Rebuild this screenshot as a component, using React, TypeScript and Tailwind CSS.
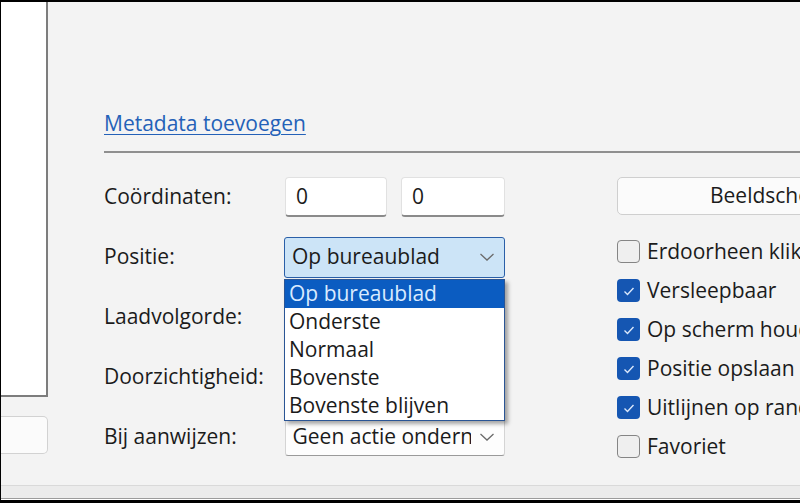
import React from "react";

const Chevron = () => (
  <svg width="16" height="10" viewBox="0 0 16 10" className="shrink-0">
    <polyline points="1.5,2 8,8 14.5,2" fill="none" stroke="#6b6b6b" strokeWidth="1.3" />
  </svg>
);

const Check = () => (
  <svg width="14" height="12" viewBox="0 0 14 12">
    <polyline points="2.5,6.5 5.5,9.5 11.5,3" fill="none" stroke="#dbe8fb" strokeWidth="1.4" />
  </svg>
);

function Box({ checked, label }: { checked: boolean; label: string }) {
  return (
    <div className="h-[39px] flex items-center gap-[7px] whitespace-nowrap">
      {checked ? (
        <div className="w-[23px] h-[23px] rounded-[4px] bg-[#1556b2] flex items-center justify-center shrink-0">
          <Check />
        </div>
      ) : (
        <div className="w-[23px] h-[23px] rounded-[4px] bg-[#efefef] border border-[#858585] shrink-0" />
      )}
      <span>{label}</span>
    </div>
  );
}

export default function App() {
  const items = ["Onderste", "Normaal", "Bovenste", "Bovenste blijven"];
  return (
    <div className="w-[800px] h-[503px] overflow-hidden bg-[#f3f3f3] border-t-2 border-l border-black flex flex-col font-['Open_Sans',sans-serif] text-[21px] text-[#1b1b1b]">
      <div className="flex flex-1 min-h-0">
        <div className="w-[47px] shrink-0 flex flex-col">
          <div className="h-[395px] bg-white border-r-2 border-b-2 border-[#7d7d7d]" />
          <div className="mt-[19px] h-[38px] bg-[#fbfbfb] border border-l-0 border-[#d2d2d2] rounded-r-[5px]" />
        </div>
        <div className="flex-1 min-w-0 pl-[56px] pt-[107px]">
          <div className="leading-[28px]">
            <span className="text-[#2461b8] underline underline-offset-[3px] decoration-1">Metadata toevoegen</span>
          </div>
          <div className="mt-[14px] h-[2px] bg-[#8f8f8f]" />
          <div className="mt-[24px] flex">
            <div className="w-[401px] shrink-0 flex flex-col gap-[20px]">
              <div className="h-[40px] flex items-center">
                <div className="w-[181px]">Coördinaten:</div>
                <div className="flex gap-[14px]">
                  <div className="w-[102px] h-[40px] bg-white border border-[#e1e1e1] border-b-2 border-b-[#8a8a8a] rounded-[4px] pl-[10px] flex items-center">0</div>
                  <div className="w-[104px] h-[40px] bg-white border border-[#e1e1e1] border-b-2 border-b-[#8a8a8a] rounded-[4px] pl-[10px] flex items-center">0</div>
                </div>
              </div>
              <div className="h-[40px] flex items-center">
                <div className="w-[181px]">Positie:</div>
                <div className="relative">
                  <div className="w-[221px] h-[41px] bg-[#cce4f7] border border-[#2a5fa8] rounded-[3px] pl-[7px] pr-[9px] flex items-center justify-between">
                    <span>Op bureaublad</span>
                    <Chevron />
                  </div>
                  <div className="absolute left-0 top-[42px] w-[221px] bg-white border border-[#2a5595] shadow-[3px_3px_4px_rgba(0,0,0,0.35)] z-10">
                    <div className="h-[28px] bg-[#0b5cc1] text-[#d9ebff] pl-[4px] flex items-center">Op bureaublad</div>
                    {items.map((t) => (
                      <div key={t} className="h-[28px] pl-[4px] flex items-center">{t}</div>
                    ))}
                  </div>
                </div>
              </div>
              <div className="h-[40px] flex items-center">
                <div className="w-[181px]">Laadvolgorde:</div>
              </div>
              <div className="h-[40px] flex items-center">
                <div className="w-[181px]">Doorzichtigheid:</div>
              </div>
              <div className="h-[40px] flex items-center">
                <div className="w-[181px]">Bij aanwijzen:</div>
                <div className="w-[221px] h-[37px] bg-[#fdfdfd] border border-[#d4d4d4] border-b-[#9a9a9a] rounded-[3px] pl-[7px] pr-[9px] flex items-center justify-between">
                  <span className="w-[178px] overflow-hidden whitespace-nowrap">Geen actie ondernemen</span>
                  <Chevron />
                </div>
              </div>
            </div>
            <div className="ml-[112px] flex-1 min-w-0 flex flex-col">
              <div className="w-[300px] h-[38px] bg-[#fbfbfb] border border-[#cfcfcf] rounded-[5px] pl-[92px] flex items-center whitespace-nowrap">Beeldscherm</div>
              <div className="mt-[17px] flex flex-col">
                <Box checked={false} label="Erdoorheen klikken" />
                <Box checked label="Versleepbaar" />
                <Box checked label="Op scherm houden" />
                <Box checked label="Positie opslaan" />
                <Box checked label="Uitlijnen op randen" />
                <Box checked={false} label="Favoriet" />
              </div>
            </div>
          </div>
        </div>
      </div>
      <div className="h-[18px] shrink-0 border-t border-[#d9d9d9] bg-[#ebebeb] flex flex-col justify-end">
        <div className="h-[5px] border-t border-[#9b9b9b] bg-white border-b-[3px] border-b-black" />
      </div>
    </div>
  );
}
